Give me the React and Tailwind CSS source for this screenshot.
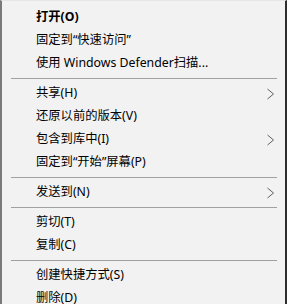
import React from 'react';

const items = [
  { label: '打开(O)', bold: true },
  { label: '固定到“快速访问”' },
  { label: '使用 Windows Defender扫描...' },
  'sep',
  { label: '共享(H)', sub: true },
  { label: '还原以前的版本(V)' },
  { label: '包含到库中(I)', sub: true },
  { label: '固定到“开始”屏幕(P)' },
  'sep',
  { label: '发送到(N)', sub: true },
  'sep',
  { label: '剪切(T)' },
  { label: '复制(C)' },
  'sep',
  { label: '创建快捷方式(S)' },
  { label: '删除(D)' },
];

const Chevron = () => (
  <svg width="9" height="12" viewBox="0 0 9 12" className="shrink-0">
    <polyline points="1.5,1 7.5,6 1.5,11" fill="none" stroke="#606060" strokeWidth="1" />
  </svg>
);

const MenuItem = ({ label, bold, sub }) => (
  <div className="h-[23px] flex items-center justify-between pl-[34px] pr-[10px] shrink-0">
    <span className={`text-[12.3px] leading-none text-black whitespace-nowrap ${bold ? 'font-bold' : 'font-normal'}`}>
      {label}
    </span>
    {sub && <Chevron />}
  </div>
);

export default function App() {
  return (
    <div
      className="w-[287px] h-[304px] overflow-hidden bg-[#f2f2f2] border-l-2 border-l-[#7a7a7a] border-r-2 border-r-[#2e2e2e] border-t border-t-[#e6e6e6] flex flex-col pt-[5px]"
      style={{ fontFamily: '"Noto Sans", "Noto Sans CJK SC", sans-serif' }}
    >
      {items.map((it, i) =>
        it === 'sep' ? (
          <div key={i} className="h-[7px] flex items-center pl-[9px] pr-[8px] shrink-0">
            <div className="w-full h-px bg-[#a0a0a0]"></div>
          </div>
        ) : (
          <MenuItem key={i} {...it} />
        )
      )}
    </div>
  );
}
